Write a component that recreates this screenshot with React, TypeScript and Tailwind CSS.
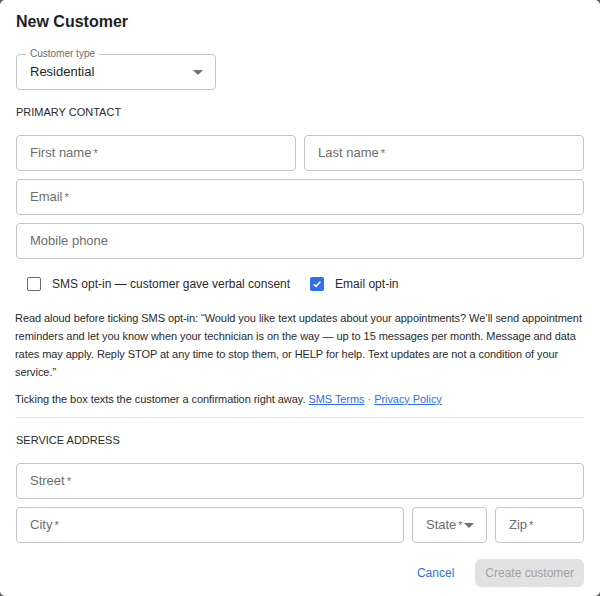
import type { ReactNode } from "react";

const Caret = ({ className = "" }: { className?: string }) => (
  <svg width="10" height="5" viewBox="0 0 10 5" className={className}>
    <path d="M0 0h10L5 5z" fill="#6f6f6f" />
  </svg>
);

const Field = ({ children, className = "" }: { children: ReactNode; className?: string }) => (
  <div
    className={`flex h-[36px] items-center rounded-[4px] border border-[#c4c4c4] bg-white pl-[13px] text-[13px] text-[#6e6e6e] ${className}`}
  >
    {children}
  </div>
);

const Req = ({ label }: { label: string }) => (
  <span>
    {label}
    <span className="ml-[2px] text-[11px]">*</span>
  </span>
);

const App = () => {
  return (
    <div
      className="h-[596px] w-[600px] bg-[#555]"
      style={{ fontFamily: '"Liberation Sans", Arial, sans-serif' }}
    >
      <div className="h-full rounded-[5px] bg-white px-4 pt-[12px] text-[#2b2b2b]">
        <h2 className="text-[16px] font-bold leading-[20px] text-[#1f1f1f]">New Customer</h2>

        <div className="relative mt-[22px] flex h-[36px] w-[200px] items-center justify-between rounded-[4px] border border-[#c4c4c4] pl-[13px] pr-[12px]">
          <span className="absolute -top-[8px] left-[9px] bg-white px-[4px] text-[10px] leading-[14px] text-[#6b6b6b]">
            Customer type
          </span>
          <span className="text-[13px] text-[#1f1f1f]">Residential</span>
          <Caret />
        </div>

        <div className="mt-[14px] text-[11px] leading-[16px] text-[#2b2b2b]">PRIMARY CONTACT</div>

        <div className="mt-[15px] flex flex-col gap-[8px]">
          <div className="grid grid-cols-2 gap-[8px]">
            <Field>
              <Req label="First name" />
            </Field>
            <Field>
              <Req label="Last name" />
            </Field>
          </div>
          <Field>
            <Req label="Email" />
          </Field>
          <Field>Mobile phone</Field>
        </div>

        <div className="mt-[13px] flex h-[24px] items-center gap-[9px] text-[12px] text-[#2b2b2b]">
          <label className="flex items-center gap-[11px] pl-[11px]">
            <span className="h-[14px] w-[14px] rounded-[2px] border-[1.5px] border-[#6b6b6b] bg-white" />
            SMS opt-in — customer gave verbal consent
          </label>
          <label className="flex items-center gap-[11px] pl-[11px]">
            <span className="flex h-[14px] w-[14px] items-center justify-center rounded-[2px] bg-[#2f6fed]">
              <svg width="10" height="10" viewBox="0 0 10 10">
                <path d="M1.8 5.2l2.2 2.2 4.3-4.6" fill="none" stroke="#fff" strokeWidth="1.6" />
              </svg>
            </span>
            Email opt-in
          </label>
        </div>

        <p className="-ml-[1px] mt-[13px] text-[11px] leading-[18px] tracking-[-0.06px] text-[#2b2b2b]">
          Read aloud before ticking SMS opt-in: “Would you like text updates about your appointments? We’ll send
          appointment reminders and let you know when your technician is on the way — up to 15 messages per month.
          Message and data rates may apply. Reply STOP at any time to stop them, or HELP for help. Text updates are
          not a condition of your service.”
        </p>

        <p className="-ml-[1px] mt-[9px] text-[11px] leading-[18px] tracking-[-0.06px] text-[#2b2b2b]">
          Ticking the box texts the customer a confirmation right away.{" "}
          <a className="text-[#2f6fed] underline">SMS Terms</a>
          <span className="text-[#6b6b6b]"> · </span>
          <a className="text-[#2f6fed] underline">Privacy Policy</a>
        </p>

        <div className="mt-[9px] border-t border-[#e2e2e2]" />

        <div className="mt-[14px] text-[11px] leading-[16px] text-[#2b2b2b]">SERVICE ADDRESS</div>

        <div className="mt-[15px] flex flex-col gap-[8px]">
          <Field>
            <Req label="Street" />
          </Field>
          <div className="flex gap-[8px]">
            <Field className="flex-1">
              <Req label="City" />
            </Field>
            <Field className="w-[75px] gap-[1px]">
              <Req label="State" />
              <Caret />
            </Field>
            <Field className="w-[89px]">
              <Req label="Zip" />
            </Field>
          </div>
        </div>

        <div className="mt-[16px] flex items-center justify-end gap-[11px]">
          <button className="h-[28px] px-[10px] text-[12px] text-[#2f6fed]">Cancel</button>
          <button className="h-[28px] rounded-[6px] bg-[#e2e2e2] px-[10px] text-[12px] text-[#a3a3a3]">
            Create customer
          </button>
        </div>
      </div>
    </div>
  );
};

export default App;
